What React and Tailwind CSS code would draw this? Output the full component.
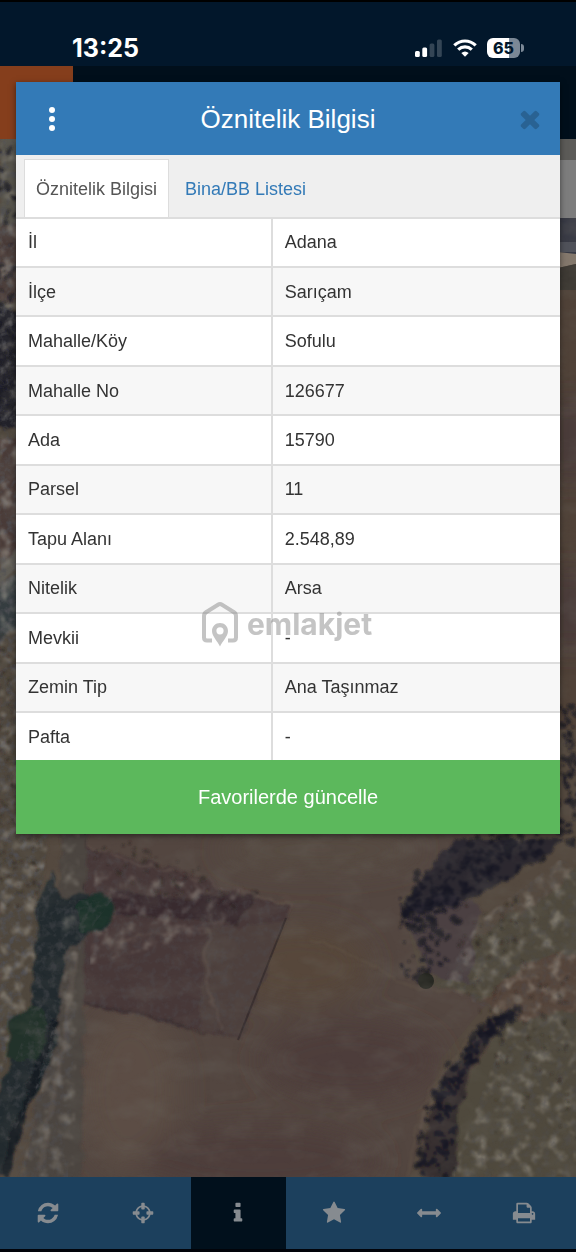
import { useState } from "react";

const ROWS = [
  ["İl", "Adana"],
  ["İlçe", "Sarıçam"],
  ["Mahalle/Köy", "Sofulu"],
  ["Mahalle No", "126677"],
  ["Ada", "15790"],
  ["Parsel", "11"],
  ["Tapu Alanı", "2.548,89"],
  ["Nitelik", "Arsa"],
  ["Mevkii", "-"],
  ["Zemin Tip", "Ana Taşınmaz"],
  ["Pafta", "-"],
];

const ICONS = {
  refresh:
    "M1639 1056q0 5-1 7-64 268-268 434.5t-478 166.5q-146 0-282.5-55t-243.5-157l-129 129q-19 19-45 19t-45-19-19-45v-448q0-26 19-45t45-19h448q26 0 45 19t19 45-19 45l-137 137q71 66 161 102t187 36q134 0 250-65t186-179q11-17 53-117 8-23 30-23h192q13 0 22.5 9.5t9.5 22.5zm25-800v448q0 26-19 45t-45 19h-448q-26 0-45-19t-19-45 19-45l138-138q-148-137-349-137-134 0-250 65t-186 179q-11 17-53 117-8 23-30 23h-199q-13 0-22.5-9.5t-9.5-22.5v-7q65-268 270-434.5t480-166.5q146 0 284 55.5t245 156.5l130-129q19-19 45-19t45 19 19 45z",
  crosshairs:
    "M1325 1024h-109q-26 0-45-19t-19-45v-128q0-26 19-45t45-19h109q-32-108-112.5-188.5t-188.5-112.5v109q0 26-19 45t-45 19h-128q-26 0-45-19t-19-45v-109q-108 32-188.5 112.5t-112.5 188.5h109q26 0 45 19t19 45v128q0 26-19 45t-45 19h-109q32 108 112.5 188.5t188.5 112.5v-109q0-26 19-45t45-19h128q26 0 45 19t19 45v109q108-32 188.5-112.5t112.5-188.5zm339-192v128q0 26-19 45t-45 19h-143q-37 161-154.5 278.5t-278.5 154.5v143q0 26-19 45t-45 19h-128q-26 0-45-19t-19-45v-143q-161-37-278.5-154.5t-154.5-278.5h-143q-26 0-45-19t-19-45v-128q0-26 19-45t45-19h143q37-161 154.5-278.5t278.5-154.5v-143q0-26 19-45t45-19h128q26 0 45 19t19 45v143q161 37 278.5 154.5t154.5 278.5h143q26 0 45 19t19 45z",
  info: "M1216 1344v128q0 26-19 45t-45 19h-512q-26 0-45-19t-19-45v-128q0-26 19-45t45-19h64v-384h-64q-26 0-45-19t-19-45v-128q0-26 19-45t45-19h384q26 0 45 19t19 45v576h64q26 0 45 19t19 45zm-128-1152v192q0 26-19 45t-45 19h-256q-26 0-45-19t-19-45v-192q0-26 19-45t45-19h256q26 0 45 19t19 45z",
  star: "M1728 647q0 22-26 48l-363 354 86 500q1 7 1 20 0 21-10.5 35.5t-30.5 14.5q-19 0-40-12l-449-236-449 236q-22 12-40 12-21 0-31.5-14.5t-10.5-35.5q0-6 2-20l86-500-364-354q-25-27-25-48 0-37 56-46l502-73 225-455q19-41 49-41t49 41l225 455 502 73q56 9 56 46z",
  arrows:
    "M1792 896q0 26-19 45l-256 256q-19 19-45 19t-45-19-19-45v-128h-1024v128q0 26-19 45t-45 19-45-19l-256-256q-19-19-19-45t19-45l256-256q19-19 45-19t45 19 19 45v128h1024v-128q0-26 19-45t45-19 45 19l256 256q19 19 19 45z",
  print:
    "M448 1536h896v-256h-896v256zm0-640h896v-384h-160q-40 0-68-28t-28-68v-160h-640v640zm1152 64q0-26-19-45t-45-19-45 19-19 45 19 45 45 19 45-19 19-45zm128 0v416q0 13-9.5 22.5t-22.5 9.5h-224v160q0 40-28 68t-68 28h-960q-40 0-68-28t-28-68v-160h-224q-13 0-22.5-9.5t-9.5-22.5v-416q0-79 56.5-135.5t135.5-56.5h64v-544q0-40 28-68t68-28h672q40 0 88 20t76 48l152 152q28 28 48 76t20 88v256h64q79 0 135.5 56.5t56.5 135.5z",
  times:
    "M1490 1322q0 40-28 68l-136 136q-28 28-68 28t-68-28l-294-294-294 294q-28 28-68 28t-68-28l-136-136q-28-28-28-68t28-68l294-294-294-294q-28-28-28-68t28-68l136-136q28-28 68-28t68 28l294 294 294-294q28-28 68-28t68 28l136 136q28 28 28 68t-28 68l-294 294 294 294q28 28 28 68z",
};

const TOOLS = [
  ["refresh", "Yenile"],
  ["crosshairs", "Konum"],
  ["info", "Bilgi"],
  ["star", "Favoriler"],
  ["arrows", "Ölçüm"],
  ["print", "Yazdır"],
];

function Icon({ name, className }) {
  return (
    <svg viewBox="0 0 1792 1792" fill="currentColor" aria-hidden="true" className={className}>
      <path d={ICONS[name]} />
    </svg>
  );
}

// Bushes are scattered along a line of [x, y, spread] points
function scatter(points, count, seed) {
  let s = seed;
  const rand = () => {
    s = (s * 16807) % 2147483647;
    return s / 2147483647;
  };
  const out = [];
  for (let i = 0; i < count; i++) {
    const t = rand() * (points.length - 1);
    const k = Math.floor(t);
    const f = t - k;
    const [x1, y1, w1] = points[k];
    const [x2, y2, w2] = points[k + 1];
    const w = w1 + (w2 - w1) * f;
    out.push({
      x: x1 + (x2 - x1) * f + (rand() - 0.5) * w,
      y: y1 + (y2 - y1) * f + (rand() - 0.5) * w,
      r: 1 + rand() * 3,
    });
  }
  return out;
}

const BUSHES = [
  ...scatter([[535, 838, 40], [480, 865, 45], [428, 895, 45], [412, 915, 26]], 210, 17),
  ...scatter([[430, 905, 60], [425, 950, 50], [420, 970, 20]], 40, 91),
  ...scatter([[516, 1012, 10], [482, 1034, 18], [458, 1070, 22], [441, 1120, 32], [434, 1176, 48]], 190, 5),
  ...scatter([[4, 300, 24], [6, 380, 28], [6, 420, 28]], 60, 44),
  ...scatter([[6, 160, 24], [6, 290, 24]], 30, 12),
  ...scatter([[570, 710, 20], [568, 835, 26]], 70, 31),
];
const SHRUBS = [
  ...scatter([[20, 640, 40], [15, 760, 40], [20, 900, 50]], 170, 7),
  ...scatter([[480, 900, 80], [520, 980, 90], [540, 1100, 90]], 120, 63),
  ...scatter([[100, 850, 30], [160, 880, 50], [230, 900, 20]], 60, 29),
];

function MapView() {
  return (
    <svg
      viewBox="0 139 576 1038"
      preserveAspectRatio="xMidYMin slice"
      className="absolute inset-0 h-full w-full"
      aria-hidden="true"
    >
      <defs>
        <filter id="rough" x="-5%" y="-5%" width="110%" height="110%">
          <feTurbulence type="fractalNoise" baseFrequency="0.06" numOctaves="3" seed="4" result="n" />
          <feDisplacementMap in="SourceGraphic" in2="n" scale="12" xChannelSelector="R" yChannelSelector="G" />
          <feGaussianBlur stdDeviation="1.1" />
        </filter>
        <filter id="soft">
          <feGaussianBlur stdDeviation="14" />
        </filter>
        <filter id="dark" x="0" y="0" width="100%" height="100%">
          <feTurbulence type="fractalNoise" baseFrequency="0.14" numOctaves="3" seed="9" result="n" />
          <feColorMatrix values="0 0 0 0 0.08  0 0 0 0 0.08  0 0 0 0 0.09  3 0 0 0 -1.35" />
          <feComposite in2="SourceGraphic" operator="in" />
          <feGaussianBlur stdDeviation="0.5" />
        </filter>
        <filter id="light" x="0" y="0" width="100%" height="100%">
          <feTurbulence type="fractalNoise" baseFrequency="0.08" numOctaves="4" seed="21" />
          <feColorMatrix values="0 0 0 0 0.38  0 0 0 0 0.35  0 0 0 0 0.3  3 0 0 0 -1.5" />
          <feComposite in2="SourceGraphic" operator="in" />
          <feGaussianBlur stdDeviation="0.8" />
        </filter>
        <filter id="grain" x="0" y="0" width="100%" height="100%">
          <feTurbulence type="fractalNoise" baseFrequency="0.03 0.05" numOctaves="4" seed="2" />
          <feColorMatrix values="0 0 0 0 0.15  0 0 0 0 0.14  0 0 0 0 0.12  1.2 0 0 0 -0.5" />
        </filter>
      </defs>

      <rect y="139" width="576" height="1038" fill="#54493f" />
      <path d="M80 834H480L400 900L420 975L490 1000L440 1060L410 1177H70Z" fill="#534640" />
      <g filter="url(#soft)">
        <ellipse cx="350" cy="1060" rx="90" ry="40" fill="#4d3d3b" />
        <ellipse cx="300" cy="965" rx="70" ry="40" fill="#56473b" />
        <ellipse cx="130" cy="1090" rx="50" ry="80" fill="#5b4d44" />
        <ellipse cx="260" cy="1160" rx="120" ry="35" fill="#4d3e3b" />
        <ellipse cx="320" cy="850" rx="100" ry="20" fill="#574c43" />
      </g>

      {/* scrubland on both sides */}
      <g filter="url(#rough)">
        <path d="M0 139H18V834H50L38 900L44 960L10 1090L0 1177Z" fill="#4f463c" />
        <path d="M0 139H18V300L0 320Z" fill="#56524c" />
        <path d="M0 225H18V300H0ZM0 440H18V560H0Z" fill="#493b39" />
        <path d="M-5 305L22 310V430L-5 425Z" fill="#20242a" />
        <path d="M-5 590L22 570V622L-5 650Z" fill="#343c40" />
        <path d="M-5 575L22 545V560L-5 595Z" fill="#615d56" />
        <path d="M560 890L500 920L430 985L490 1005L520 1000L455 1100L440 1177H590V850Z" fill="#4f4a3e" />
        <path d="M480 1000L530 960L590 950V1010L520 1020Z" fill="#54443a" />
        <path d="M405 910L450 890L480 910L470 985L425 970Z" fill="#4b4043" />
      </g>
      <g opacity="0.8">
        <path d="M0 139H18V834H48L36 940L0 1090Z" filter="url(#dark)" />
        <path d="M0 139H18V834H50L40 890L34 1000L0 1070Z" filter="url(#light)" opacity="0.7" />
        <path d="M560 860L480 920L440 985L510 1020L450 1177H576V860Z" filter="url(#light)" opacity="0.7" />
        <path d="M560 860L480 920L440 985L510 1020L450 1177H576V860Z" filter="url(#dark)" opacity="0.4" />
      </g>

      {/* right edge beside the dialog */}
      <path d="M558 218H576V260H558Z" fill="#383a45" />
      <path d="M558 242H576V252H558Z" fill="#50525a" />
      <path d="M558 252L576 254V264L558 268Z" fill="#85796d" />
      <path d="M558 268L576 264V296H558Z" fill="#3d3933" />
      <path d="M558 290H576V730H558Z" fill="#504238" />
      <g filter="url(#soft)">
        <path d="M560 400H580V480H560ZM560 570H580V650H560Z" fill="#44393b" />
      </g>

      {/* fenced parcel */}
      <g filter="url(#rough)">
        <path d="M82 848L140 858L290 908L240 1040L76 1002Z" fill="#463939" />
        <path d="M205 930L285 920L240 1035L200 1030Z" fill="#4e403d" />
        <path d="M110 890L180 898L260 893L235 925L180 918L115 915Z" fill="#302729" opacity="0.7" />
      </g>
      <path d="M88 848L290 906L288 915M120 940Q150 930 175 936M208 935L206 975L222 1030" fill="none" stroke="#6a5b53" strokeWidth="2" opacity="0.5" filter="url(#rough)" />
      <path d="M286 918L238 1040M85 834L79 1000L72 1177" fill="none" stroke="#2b2324" strokeWidth="2" opacity="0.6" />
      <path d="M80 1003Q150 1012 205 1035" fill="none" stroke="#322829" strokeWidth="2" opacity="0.6" filter="url(#rough)" />
      <path d="M82 848L290 908L240 1040L76 1002Z" filter="url(#dark)" opacity="0.3" />
      <path d="M95 870L240 890L220 930L90 965Z" filter="url(#light)" opacity="0.45" />

      {/* stream and its banks */}
      <g filter="url(#rough)">
        <path d="M62 834H86L82 1177H20L50 1050L58 960Z" fill="#4b443f" />
        <path d="M52 870L62 900L85 895L112 900L106 928L84 938L68 945L58 1020L52 1060L10 1140L4 1177H-5V1100L30 1020L38 900Z" fill="#232c2f" />
        <path d="M75 905Q100 885 114 905Q110 935 82 934Z" fill="#1c302a" />
        <path d="M8 1020L35 1005L48 1020L40 1060L8 1058Z" fill="#20302c" />
        <path d="M56 1020L20 1120L4 1177" fill="none" stroke="#171a22" strokeWidth="8" />
        <path d="M76 950L62 1050L40 1170" fill="none" stroke="#6a625b" strokeWidth="5" opacity="0.4" />
      </g>
      <path d="M52 870L62 900L112 900L84 938L58 1020L52 1060L10 1140H0V1100L30 1020L38 900Z" filter="url(#dark)" opacity="0.4" />
      <path d="M55 1020L76 1000L68 1177H10Z" filter="url(#dark)" opacity="0.5" />
      <path d="M62 834H80L74 1177H20L60 1010Z" filter="url(#light)" opacity="0.4" />

      {/* paths across the scrub */}
      <path d="M310 940Q360 955 395 980Q440 1000 500 990M500 1005Q430 1070 415 1130L405 1177" fill="none" stroke="#6b5d4b" strokeWidth="2" opacity="0.3" filter="url(#rough)" />
      <path d="M478 1040Q440 1070 420 1130" fill="none" stroke="#706356" strokeWidth="5" opacity="0.4" filter="url(#rough)" />

      {/* tree lines */}
      <g filter="url(#rough)">
        <path d="M455 840H565L535 862L480 895L450 905L408 915L406 895L430 870Z" fill="#20202a" opacity="0.7" />
        <path d="M519 1005L494 1035L469 1075L459 1120L454 1177H419L429 1120L449 1070L484 1025Z" fill="#292426" opacity="0.7" />
        {SHRUBS.map((b, i) => (
          <circle key={i} cx={b.x} cy={b.y} r={b.r * 0.5} fill="#2e2824" opacity="0.65" />
        ))}
        {BUSHES.map((b, i) => (
          <circle key={i} cx={b.x} cy={b.y} r={b.r} fill="#171721" opacity="0.75" />
        ))}
      </g>
      <circle cx="426" cy="981" r="8" fill="#252620" />
      <rect y="139" width="576" height="1038" filter="url(#grain)" opacity="0.45" />
      <path d="M560 139H576V160H560Z" fill="#5c5b58" />
      <path d="M558 160H576V218H558Z" fill="#7d7d7d" />
    </svg>
  );
}

function StatusBar() {
  return (
    <div className="flex h-[66px] items-center justify-between border-t-2 border-black bg-[#02172b] pt-7 pr-[52px] pl-[72px] text-white">
      <span className="font-['Inter'] text-[25px] leading-8 font-bold">13:25</span>
      <div className="flex items-center gap-[10px]">
        <svg viewBox="0 0 28 18" className="h-[18px] w-7" fill="currentColor" aria-hidden="true">
          <rect x="0" y="12" width="4.800" height="6" rx="1.500" />
          <rect x="7.300" y="8.500" width="4.800" height="9.500" rx="1.500" />
          <rect x="14.600" y="4.500" width="4.800" height="13.500" rx="1.500" opacity="0.2" />
          <rect x="22" y="0.500" width="4.800" height="17.500" rx="1.500" opacity="0.2" />
        </svg>
        <svg viewBox="0 0 24 18" className="h-[18px] w-6" fill="none" stroke="currentColor" strokeWidth="3.200" aria-hidden="true">
          <path d="M1.300 6.400Q6 2 12 2T22.700 6.400" />
          <path d="M5.200 10.600Q8.200 7.800 12 7.800T18.800 10.600" />
          <path d="M12 17.800L8.300 14Q12 11 15.700 14Z" fill="currentColor" stroke="none" />
        </svg>
        <div className="flex items-center gap-px">
          <div className="flex h-5 w-[33px] items-center justify-center rounded-[6px] bg-linear-to-r from-white from-66% to-[#7b8896] to-66% font-['Inter'] text-base leading-5 font-extrabold text-[#02172b]">
            65
          </div>
          <div className="h-2 w-[3px] rounded-r-full bg-[#7b8896]" />
        </div>
      </div>
    </div>
  );
}

function Watermark() {
  return (
    <div className="pointer-events-none absolute top-[519px] left-[34%] flex items-center gap-2 text-[#8a8a8a] opacity-50">
      <svg viewBox="0 0 38 46" className="h-[46px] w-[38px]" fill="none" stroke="currentColor" strokeWidth="4" strokeLinejoin="round" aria-hidden="true">
        <path d="M11 39.500H6Q3 39.500 3 36.500V15Q3 12.500 5 11.200L17 3.700Q19 2.500 21 3.700L33 11.200Q35 12.500 35 15V36.500Q35 39.500 32 39.500H27" />
        <path fill="currentColor" stroke="none" fillRule="evenodd" d="M19 22C14.500 22 11 25.500 11 30C11 35.500 16.500 40 19 45.500C21.500 40 27 35.500 27 30C27 25.500 23.500 22 19 22ZM19 26.200A3.600 3.600 0 1 1 19 33.400A3.600 3.600 0 1 1 19 26.200Z" />
      </svg>
      <span className="font-['Inter'] text-[30px] leading-10 font-bold">emlakjet</span>
    </div>
  );
}

function AttributeDialog({ tab, onTabChange }) {
  return (
    <section
      role="dialog"
      aria-labelledby="dialog-title"
      className="absolute inset-x-4 top-[82px] bg-white shadow-[0_2px_6px_rgba(0,0,0,0.5)]"
    >
      <header className="grid h-[73px] grid-cols-[72px_1fr_72px] items-center bg-[#337ab7] text-white">
        <button type="button" aria-label="Menü" className="flex cursor-pointer flex-col items-center gap-[3px]">
          <span className="size-[6px] rounded-full bg-white" />
          <span className="size-[6px] rounded-full bg-white" />
          <span className="size-[6px] rounded-full bg-white" />
        </button>
        <h1 id="dialog-title" className="text-center text-[26px] leading-8">
          Öznitelik Bilgisi
        </h1>
        <button type="button" aria-label="Kapat" className="flex cursor-pointer justify-end pr-4">
          <Icon name="times" className="size-7 text-[#296293]" />
        </button>
      </header>

      <div role="tablist" className="flex h-16 border-b-2 border-[#ddd] bg-[#efefef] px-2 pt-1">
        {["Öznitelik Bilgisi", "Bina/BB Listesi"].map((label, i) => (
          <button
            key={label}
            type="button"
            role="tab"
            aria-selected={tab === i}
            onClick={() => onTabChange(i)}
            className={
              tab === i
                ? "cursor-pointer border border-b-0 border-[#ddd] bg-white px-[11px] text-lg text-[#555]"
                : "cursor-pointer border-t border-transparent px-4 text-lg text-[#337ab7]"
            }
          >
            {label}
          </button>
        ))}
      </div>

      <table className="h-[541px] w-full table-fixed border-collapse text-lg text-[#333]">
        <tbody>
          {ROWS.map(([label, value]) => (
            <tr key={label} className="border-b-2 border-[#ddd] last:border-b-0 even:bg-[#f7f7f7]">
              <th scope="row" className="w-[47%] border-r-2 border-[#ddd] px-3 text-left font-normal">
                {label}
              </th>
              <td className="px-3">{value}</td>
            </tr>
          ))}
        </tbody>
      </table>

      <button
        type="button"
        className="h-[74px] w-full cursor-pointer bg-[#5cb85c] text-center text-xl text-white"
      >
        Favorilerde güncelle
      </button>
      <Watermark />
    </section>
  );
}

function App() {
  const [tab, setTab] = useState(0);
  const [tool, setTool] = useState("info");

  return (
    <div className="relative flex min-h-screen flex-col bg-black font-['Liberation_Sans',Arial,sans-serif]">
      <StatusBar />
      <div className="h-[73px] bg-[#010f1b]">
        <div className="h-full w-[73px] bg-[#853e1c]" />
      </div>
      <main className="relative flex-1 overflow-hidden">
        <MapView />
      </main>
      <nav className="grid h-[75px] grid-cols-6 border-b-3 border-[#02040a] bg-[#1c405d] pr-1">
        {TOOLS.map(([name, label]) => (
          <button
            key={name}
            type="button"
            aria-label={label}
            onClick={() => setTool(name)}
            className={
              tool === name
                ? "flex cursor-pointer items-center justify-center bg-[#01101c] text-[#868b90]"
                : "flex cursor-pointer items-center justify-center text-[#868b90]"
            }
          >
            <Icon name={name} className="size-6" />
          </button>
        ))}
      </nav>
      <AttributeDialog tab={tab} onTabChange={setTab} />
    </div>
  );
}

export default App;
